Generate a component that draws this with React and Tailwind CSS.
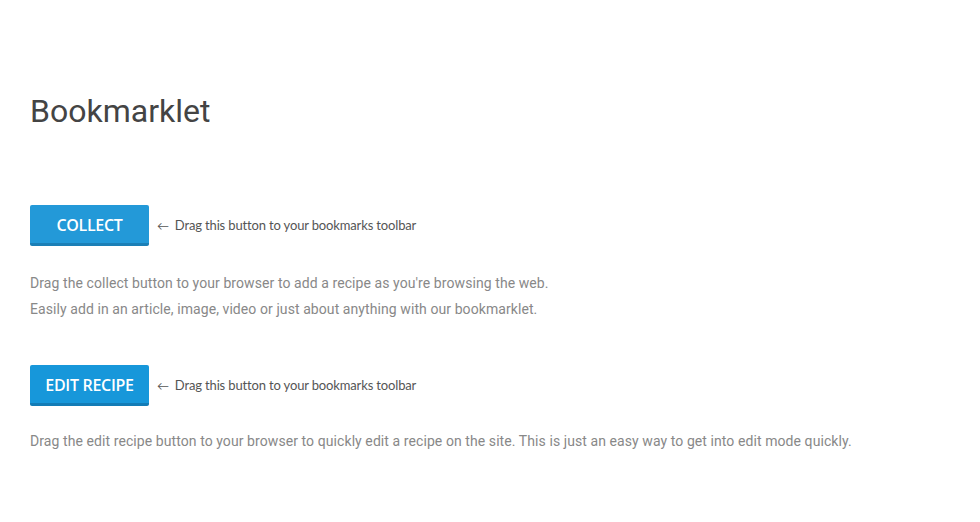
export default function App() {
  const helper = (
    <div className="flex items-center ml-[8px] text-[13px] tracking-[-0.15px] text-[#555] font-['Lato',sans-serif]">
      <span className="text-[12px] mr-[6px] leading-none">←</span>
      <span>Drag this button to your bookmarks toolbar</span>
    </div>
  );
  return (
    <div className="min-h-[522px] bg-white px-[30px] pt-[91px] font-['Roboto',sans-serif]">
      <h1 className="text-[32px] leading-[40px] text-[#444] font-normal">Bookmarklet</h1>

      <div className="mt-[74px] flex items-center">
        <a className="w-[119px] h-[41px] flex items-center justify-center bg-[#2399d8] border-b-[3px] border-[#1b7fb6] rounded-[2px] text-white text-[16px] font-semibold font-['Open_Sans',sans-serif] tracking-[-0.3px] pt-[2px]">
          COLLECT
        </a>
        {helper}
      </div>

      <div className="mt-[24px] text-[14px] leading-[26px] tracking-[0.08px] text-[#888]">
        <p>Drag the collect button to your browser to add a recipe as you're browsing the web.</p>
        <p>Easily add in an article, image, video or just about anything with our bookmarklet.</p>
      </div>

      <div className="mt-[43px] flex items-center">
        <a className="w-[119px] h-[41px] flex items-center justify-center bg-[#1797da] border-b-[3px] border-[#137cb6] rounded-[2px] text-white text-[16px] font-semibold font-['Open_Sans',sans-serif] tracking-[-0.3px] pt-[2px]">
          EDIT RECIPE
        </a>
        {helper}
      </div>

      <div className="mt-[22px] text-[14px] leading-[26px] tracking-[0.08px] text-[#888]">
        <p>Drag the edit recipe button to your browser to quickly edit a recipe on the site. This is just an easy way to get into edit mode quickly.</p>
      </div>
    </div>
  );
}
